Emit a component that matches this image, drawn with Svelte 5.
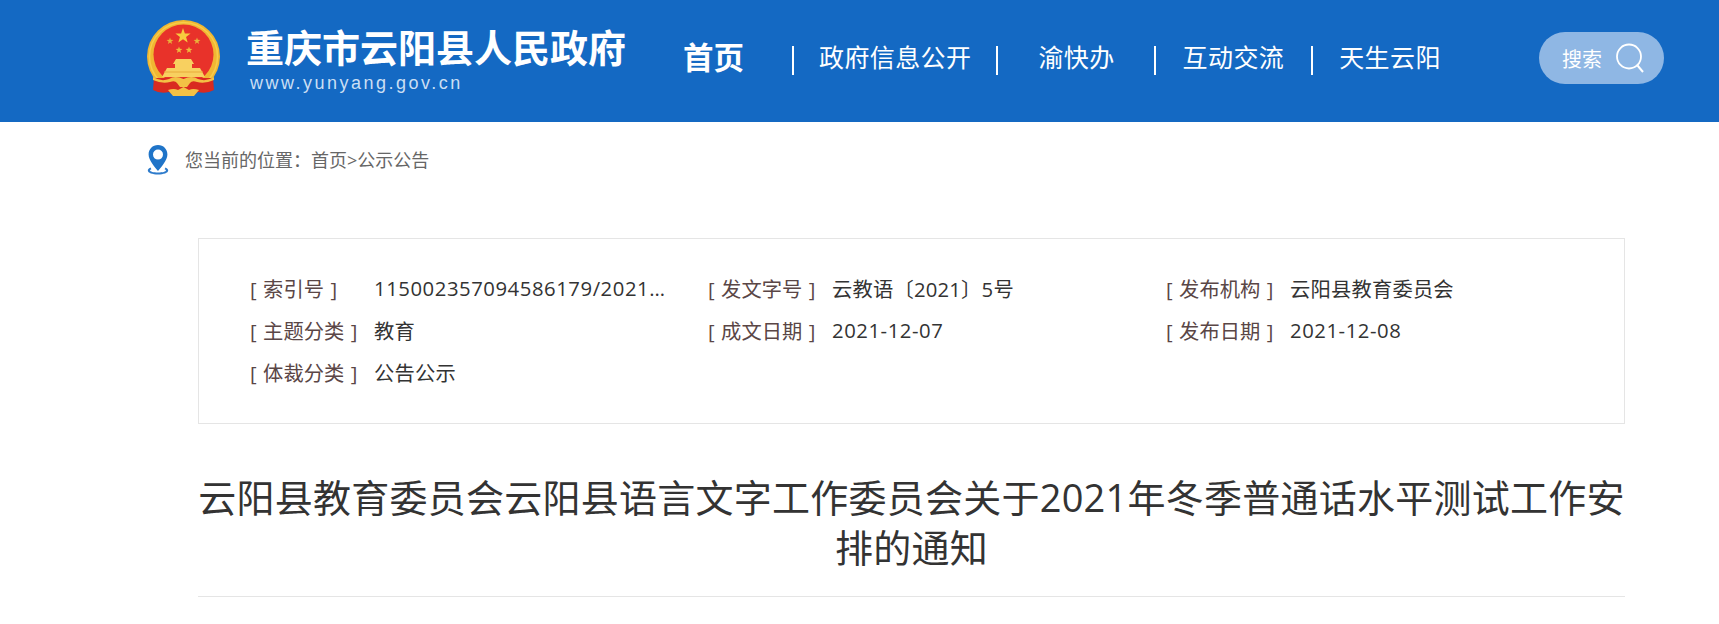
<script lang="ts">
  const nav = [
    { label: "首页", cls: "home" },
    { label: "政府信息公开", cls: "gov" },
    { label: "渝快办", cls: "wide" },
    { label: "互动交流", cls: "" },
    { label: "天生云阳", cls: "last" }
  ];
  const meta = [
    ["[ 索引号 ]", "115002357094586179/2021-00005"],
    ["[ 发文字号 ]", "云教语〔2021〕5号"],
    ["[ 发布机构 ]", "云阳县教育委员会"],
    ["[ 主题分类 ]", "教育"],
    ["[ 成文日期 ]", "2021-12-07"],
    ["[ 发布日期 ]", "2021-12-08"],
    ["[ 体裁分类 ]", "公告公示"]
  ];
  const star = (cx: number, cy: number, r: number) =>
    Array.from({ length: 10 }, (_, i) => {
      const a = -Math.PI / 2 + (i * Math.PI) / 5;
      const d = i % 2 ? r * 0.4 : r;
      return `${(cx + d * Math.cos(a)).toFixed(2)},${(cy + d * Math.sin(a)).toFixed(2)}`;
    }).join(" ");
</script>

<header class="top">
  <!-- national emblem, redrawn small -->
  <svg class="emblem" viewBox="0 0 73 77" width="73" height="77" aria-hidden="true">
    <circle cx="36.5" cy="36.5" r="36.5" fill="#f0b732" />
    <circle cx="36.5" cy="36.5" r="34" fill="none" stroke="#f7cc4a" stroke-width="1.5" />
    <circle cx="36.5" cy="34.5" r="30" fill="#e8322a" />
    <polygon points={star(36, 16, 8)} fill="#f7ca3e" />
    <polygon points={star(23, 21, 3.6)} fill="#e9b13a" />
    <polygon points={star(50, 21, 3.6)} fill="#e9b13a" />
    <polygon points={star(32, 30, 3.6)} fill="#f0bb3c" />
    <polygon points={star(42, 30, 3.6)} fill="#f0bb3c" />
    <!-- gate -->
    <path d="M26 44 L29 39 H44 L47 44 H45 V48 H53 L58 57 H15 L20 48 H28 V44 Z" fill="#f8d060" />
    <rect x="17" y="51.5" width="39" height="1" fill="#e8a93a" />
    <!-- ribbon -->
    <path d="M7 58 H66 L67 70 Q60 74 51 72 L47 75 H26 L22 72 Q13 74 6 70 Z" fill="#d92a20" />
    <path d="M6 57 Q14 62 22 59 Q28 55 36.5 59 Q45 55 51 59 Q59 62 67 57 L67 60 Q58 64 50 62 Q45 60 43 63 L40 67 H33 L30 63 Q28 60 23 62 Q15 64 6 60 Z" fill="#f3c145" />
    <path d="M21 70 Q27 68 31 70 L36.5 67 L42 70 Q46 68 52 70 L47 76 H26 Z" fill="#f3c145" />
  </svg>

  <div class="brand">
    <div class="brand-name">重庆市云阳县人民政府</div>
    <div class="brand-url">www.yunyang.gov.cn</div>
  </div>

  <nav class="nav">
    {#each nav as item, i}
      <a class="nav-item {item.cls}" class:sep={i < nav.length - 1} href="#top"><span>{item.label}</span></a>
    {/each}
  </nav>

  <div class="search">
    <span>搜索</span>
    <svg viewBox="0 0 30 30" width="30" height="30" aria-hidden="true">
      <circle cx="14" cy="13.5" r="12" fill="none" stroke="#fff" stroke-width="1.8" />
      <path d="M22.5 22.5 L28 29" fill="none" stroke="#fff" stroke-width="2" />
    </svg>
  </div>
</header>

<div class="crumb">
  <svg viewBox="0 0 22 30" width="22" height="30" aria-hidden="true">
    <path d="M3.5 22.5 C1.5 23.3 .8 24.6 .8 25.6 C.8 28 5.5 29.6 11 29.6 C16.5 29.6 21.2 28 21.2 25.6 C21.2 24.6 20.5 23.3 18.5 22.5 L17.6 24.2 C18.6 24.7 19 25.2 19 25.6 C19 26.6 15.5 27.6 11 27.6 C6.5 27.6 3 26.6 3 25.6 C3 25.2 3.4 24.7 4.4 24.2 Z" fill="#2d7bcb" />
    <path fill-rule="evenodd" d="M11 0 C5.5 0 1.6 4.2 1.6 9.4 C1.6 15.4 8 22 11 26 C14 22 20.4 15.4 20.4 9.4 C20.4 4.2 16.5 0 11 0 Z M11 4.6 A5 5 0 1 1 11 14.6 A5 5 0 1 1 11 4.6 Z" fill="#1f74c8" />
  </svg>
  <span>您当前的位置：首页&gt;公示公告</span>
</div>

<main class="content">
  <section class="meta">
    {#each meta as [label, value]}
      <div class="cell">
        <span class="label">{label}</span>
        <span class="value" class:num={/^\d/.test(value)}>{value}</span>
      </div>
    {/each}
  </section>

  <h1 class="title">云阳县教育委员会云阳县语言文字工作委员会关于2021年冬季普通话水平测试工作安排的通知</h1>
</main>

<style>
  :global(body) {
    background: #fff;
    font-family: "Open Sans", "Noto Sans CJK SC", sans-serif;
    color: #333;
  }
  .top {
    display: flex;
    align-items: center;
    height: 122px;
    padding: 0 55px 0 147px;
    background: #1469c3;
    color: #fff;
  }
  .emblem {
    flex: none;
    margin-top: -6px;
  }
  .brand {
    flex: none;
    width: 437px;
    margin: -4px 0 0 26px;
  }
  .brand-name {
    font-size: 38px;
    font-weight: 700;
    line-height: 42px;
    white-space: nowrap;
  }
  .brand-url {
    margin: 6px 0 0 4px;
    font-family: "Liberation Sans", sans-serif;
    font-size: 18px;
    line-height: 18px;
    letter-spacing: 2.5px;
    color: #cbdff3;
  }
  .nav {
    display: flex;
    align-items: center;
    margin-top: -2px;
  }
  .nav-item {
    padding: 0 27px;
    color: #fff;
    font-size: 25px;
    line-height: 29px;
    letter-spacing: .4px;
    text-decoration: none;
    white-space: nowrap;
  }
  .nav-item span {
    display: block;
    margin-top: -3px;
    margin-bottom: 3px;
  }
  .nav-item.sep {
    border-right: 2px solid #fff;
  }
  .nav-item.home {
    padding: 0 48px 0 0;
    font-size: 30.5px;
    font-weight: 700;
    letter-spacing: 0;
  }
  .nav-item.gov {
    padding: 0 25px;
  }
  .nav-item.wide {
    padding: 0 39px 0 40px;
  }
  .nav-item.last {
    padding: 0 0 0 26px;
  }
  .search {
    display: flex;
    align-items: center;
    justify-content: space-between;
    box-sizing: border-box;
    width: 125px;
    height: 52px;
    margin-left: auto;
    margin-top: -6px;
    padding: 0 19px 0 23px;
    border-radius: 26px;
    background: #8fb7e4;
    color: #fff;
    font-size: 20px;
  }
  .crumb {
    display: flex;
    align-items: center;
    gap: 16px;
    height: 30px;
    margin-top: 23px;
    padding-left: 147px;
    color: #666;
    font-size: 18px;
    line-height: 26px;
  }
  .content {
    width: 1427px;
    margin: 63px 0 0 198px;
  }
  .meta {
    display: grid;
    grid-template-columns: repeat(3, 458px);
    grid-auto-rows: 42px;
    box-sizing: border-box;
    height: 186px;
    padding: 28px 0 0 51px;
    border: 1px solid #e5e5e5;
  }
  .cell {
    display: flex;
    align-items: center;
    font-size: 20.3px;
  }
  .label {
    flex: none;
    width: 124px;
    color: #5a4646;
    white-space: pre;
    word-spacing: 1.2px;
  }
  .value {
    max-width: 292px;
    overflow: hidden;
    letter-spacing: .2px;
    text-overflow: ellipsis;
    white-space: nowrap;
  }
  .value.num {
    letter-spacing: .55px;
  }
  .title {
    margin: 0;
    padding: 48px 0 24px;
    border-bottom: 1px solid #e5e5e5;
    font-size: 38px;
    font-weight: 400;
    line-height: 50px;
    letter-spacing: .25px;
    text-align: center;
    color: #333;
  }
</style>
